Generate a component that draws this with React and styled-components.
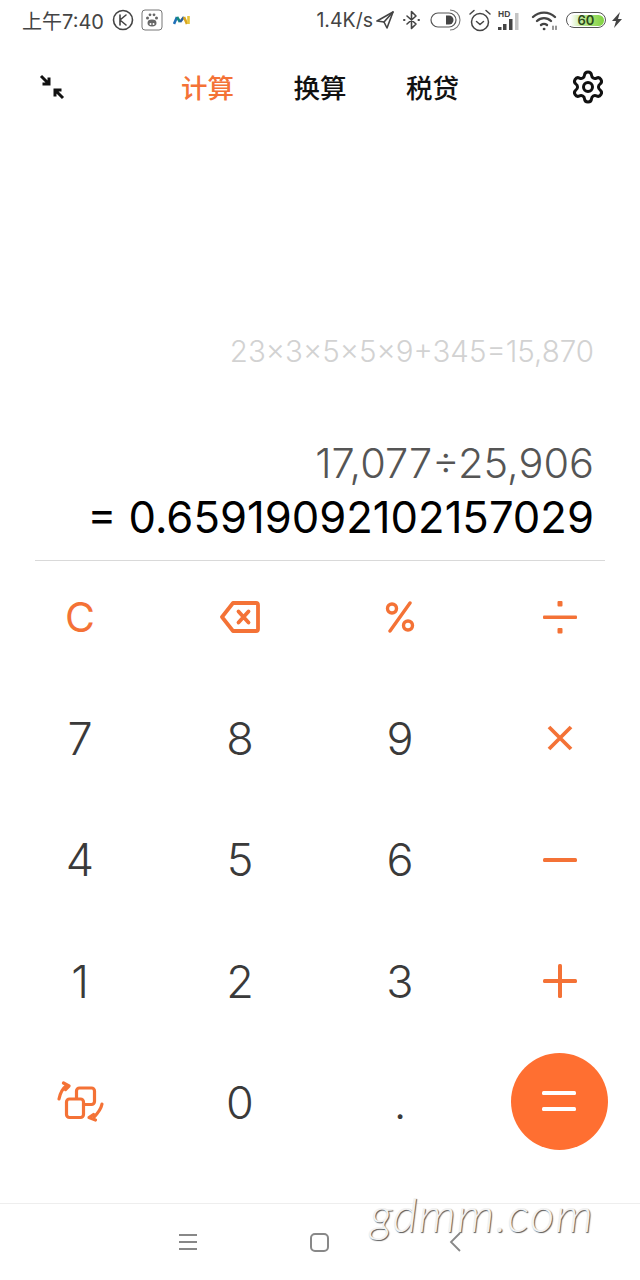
import React from "react";
import styled, { createGlobalStyle } from "styled-components";
import { Settings } from "lucide-react";

const ORANGE = "#f47236";

const Global = createGlobalStyle`
  html, body { margin: 0; padding: 0; background: #fff; }
  body { font-family: "Inter", "Noto Sans CJK SC", sans-serif; }
`;

const Page = styled.div`
  width: 640px;
  height: 1280px;
  position: relative;
  overflow: hidden;
  display: flex;
  flex-direction: column;
  background: #fff;
`;

const StatusBar = styled.div`
  height: 40px;
  padding: 0 17px 0 22px;
  display: flex;
  align-items: center;
  justify-content: space-between;
  color: #444;
`;

const StatusGroup = styled.div`
  display: flex;
  align-items: center;
`;

const Slot = styled.div`
  margin-left: ${(p) => p.$left || 0}px;
  display: flex;
`;

const StatusText = styled.span`
  font-family: "Inter", "Noto Sans CJK SC", sans-serif;
  font-size: ${(p) => p.$size || 19.5}px;
  white-space: nowrap;
`;

const NavTabs = styled.div`
  height: 94px;
  padding: 0 34px 0 38px;
  display: flex;
  align-items: center;
  justify-content: space-between;
`;

const Tabs = styled.div`
  display: flex;
  gap: 59.5px;
  margin-left: 4px;
`;

const Tab = styled.div`
  font-family: "Noto Sans CJK SC", sans-serif;
  font-size: 26.5px;
  font-weight: 500;
  line-height: 34px;
  color: ${(p) => (p.$active ? ORANGE : "#111")};
`;

const Display = styled.div`
  height: 427px;
  margin: 0 35px;
  box-sizing: border-box;
  border-bottom: 1px solid #d9d9d9;
  display: flex;
  flex-direction: column;
  align-items: flex-end;
  padding: 0 11px 0 0;
  white-space: nowrap;
`;

const History = styled.div`
  margin-top: 197px;
  font-size: 29.5px;
  font-weight: 300;
  line-height: 40px;
  color: #d2d2d2;
`;

const Expression = styled.div`
  margin-top: 66px;
  font-size: 41.5px;
  font-weight: 300;
  line-height: 52px;
  color: #555;
`;

const Result = styled.div`
  margin-top: 3px;
  font-size: 43.6px;
  font-weight: 380;
  line-height: 52px;
  color: #000;
`;

const Keypad = styled.div`
  height: 608px;
  display: grid;
  grid-template-columns: repeat(4, 160px);
  grid-auto-rows: 121.5px;
  margin-top: -5px;
`;

const Key = styled.div`
  display: flex;
  align-items: center;
  justify-content: center;
  font-size: ${(p) => p.$size || 45}px;
  font-weight: ${(p) => p.$weight || 300};
  color: ${(p) => (p.$accent ? ORANGE : "#3a3a3a")};
`;

const EqualsButton = styled.div`
  width: 97px;
  height: 97px;
  margin: 0 2px 3px 0;
  border-radius: 50%;
  background: #ff6f31;
  display: flex;
  align-items: center;
  justify-content: center;
`;

const BottomNav = styled.div`
  position: absolute;
  left: 0;
  right: 0;
  top: 1203px;
  height: 77px;
  border-top: 1px solid #eeeeee;
  box-sizing: border-box;
  padding-left: 178px;
  display: grid;
  grid-template-columns: 132px 139px auto;
  align-items: center;
`;

const Watermark = styled.div`
  position: absolute;
  left: 370px;
  top: 1187px;
  font-family: "Lato", sans-serif;
  font-style: italic;
  font-weight: 300;
  font-size: 48px;
  line-height: 54px;
  letter-spacing: 1px;
  color: #f2f2f2;
  text-shadow: 1px 1px 1px #555;
`;

const Stroke = styled.svg`
  display: block;
  fill: none;
  stroke: ${(p) => p.$color || "currentColor"};
  stroke-linecap: round;
  stroke-linejoin: round;
`;

const KIcon = () => (
  <Stroke width="22" height="22" viewBox="0 0 22 22" strokeWidth="1.6">
    <circle cx="11" cy="11" r="9.5" />
    <path d="M8 6v10M14 6l-6 5 6 5" />
  </Stroke>
);

const PawIcon = () => (
  <svg width="22" height="24" viewBox="0 0 22 24">
    <rect x="1" y="2" width="20" height="20" rx="3" fill="none" stroke="#777" strokeWidth="1" />
    <g fill="#666">
      <circle cx="6.5" cy="10" r="1.5" />
      <circle cx="15.5" cy="10" r="1.5" />
      <circle cx="9" cy="6.8" r="1.4" />
      <circle cx="13" cy="6.8" r="1.4" />
      <ellipse cx="11" cy="15" rx="4.5" ry="3.4" />
    </g>
    <circle cx="9.5" cy="16" r="1" fill="#fff" />
    <circle cx="12.5" cy="16" r="1" fill="#fff" />
  </svg>
);

const MiniLogo = () => (
  <svg width="18" height="10" viewBox="0 0 18 10" fill="none" strokeWidth="2.6">
    <path d="M1 9 4 2" stroke="#1f6fb8" />
    <path d="M4 2l3 5" stroke="#14897f" />
    <path d="M7 7l4-5" stroke="#2a5f9e" />
    <path d="M11 2l3 7" stroke="#d9a520" />
    <path d="M15.5 1v8" stroke="#e8c53a" />
  </svg>
);

const LocationIcon = () => (
  <Stroke width="18" height="18" viewBox="0 0 18 18" strokeWidth="1.6">
    <path d="M17 1 1 10l7 1 3 6z" />
    <path d="M17 1 8 11" />
  </Stroke>
);

const BluetoothIcon = () => (
  <Stroke width="17" height="20" viewBox="0 0 17 20" strokeWidth="1.6">
    <path d="M4 6l9 8-4.5 4.5V1.5L13 6l-9 8" />
    <path d="M1 10h.5M15.5 10h.5" strokeWidth="2" />
  </Stroke>
);

const ToggleIcon = () => (
  <svg width="31" height="22" viewBox="0 0 31 22">
    <rect x="1" y="4" width="25" height="14" rx="7" fill="none" stroke="#555" strokeWidth="1.2" />
    <path d="M16 6.5h3a4.5 4.5 0 0 1 0 9h-3z" fill="#444" />
    <path d="M20 1a10 10 0 0 1 0 20" fill="none" stroke="#777" strokeWidth="1.1" />
  </svg>
);

const AlarmIcon = () => (
  <Stroke width="24" height="24" viewBox="0 0 24 24" strokeWidth="1.5">
    <circle cx="12" cy="14" r="8.5" />
    <path d="M8.5 13.5l3.5 3 3.5-3M2 6l4-3.5M22 6l-4-3.5" />
  </Stroke>
);

const HdLabel = styled.text`
  font-family: "Liberation Sans", sans-serif;
  font-size: 8.5px;
  font-weight: 700;
  fill: #444;
`;

const SignalIcon = () => (
  <svg width="26" height="24" viewBox="0 0 26 24">
    <rect x="1" y="19" width="3.5" height="3" fill="#444" />
    <rect x="6" y="16" width="3.5" height="6" fill="#444" />
    <rect x="12" y="11" width="3.5" height="11" fill="#444" />
    <rect x="18" y="5" width="3.5" height="17" fill="#c4c4c4" />
    <HdLabel x="1" y="9">HD</HdLabel>
  </svg>
);

const WifiIcon = () => (
  <Stroke width="28" height="22" viewBox="0 0 28 22" strokeWidth="2.4">
    <path d="M2 8a16 16 0 0 1 22 0M6 12a10 10 0 0 1 14 0M10 16a5 5 0 0 1 6 0" />
    <path d="M13 20h.2" strokeWidth="2.6" />
    <path d="M22 17v3.5M25 17v3.5" strokeWidth="1.1" />
  </Stroke>
);

const BatteryBox = styled.div`
  width: 40px;
  height: 16px;
  box-sizing: border-box;
  border: 1.5px solid #555;
  border-radius: 8px;
  padding: 1.5px;
  display: flex;
`;

const BatteryFill = styled.div`
  flex: 1;
  border-radius: 0 6px 6px 0;
  background: linear-gradient(to right, #fff 5%, #bde88f 40%, #7fd23f 100%);
  font-size: 13px;
  line-height: 10px;
  font-weight: 600;
  text-align: center;
  color: #2c4a1c;
`;

const BoltIcon = () => (
  <svg width="12" height="18" viewBox="0 0 12 18">
    <path d="M9 1 1 10h4l-2 7 8-9H7z" fill="#444" />
  </svg>
);

const CollapseIcon = () => (
  <Stroke width="28" height="28" viewBox="0 0 28 28" $color="#111" strokeWidth="3">
    <path d="M3 3l8 8M11 4.5V11H4.5" strokeLinecap="butt" strokeLinejoin="miter" />
    <path d="M25 25l-8-8M17 23.5V17h6.5" strokeLinecap="butt" strokeLinejoin="miter" />
  </Stroke>
);

const BackspaceIcon = () => (
  <Stroke width="40" height="32" viewBox="0 0 40 32" $color={ORANGE} strokeWidth="3.8">
    <path d="M13 2h23a2 2 0 0 1 2 2v24a2 2 0 0 1-2 2H13L2 16z" />
    <path d="M18.5 10.5l10 11M28.5 10.5l-10 11" />
  </Stroke>
);

const PercentIcon = () => (
  <Stroke width="30" height="32" viewBox="0 0 30 32" $color={ORANGE} strokeWidth="3.4">
    <circle cx="7" cy="7.5" r="4.5" />
    <circle cx="23" cy="24.5" r="4.5" />
    <path d="M25 2 5 30" />
  </Stroke>
);

const DivideIcon = () => (
  <svg width="34" height="34" viewBox="0 0 34 34">
    <rect x="0" y="15.5" width="34" height="3.5" rx="1" fill={ORANGE} />
    <rect x="14.5" y="1" width="5" height="5.5" rx="1" fill={ORANGE} />
    <rect x="14.5" y="28" width="5" height="5.5" rx="1" fill={ORANGE} />
  </svg>
);

const TimesIcon = () => (
  <Stroke width="28" height="28" viewBox="0 0 28 28" $color={ORANGE} strokeWidth="3.8">
    <path d="M3 3l22 22M25 3 3 25" strokeLinecap="butt" />
  </Stroke>
);

const MinusIcon = () => (
  <svg width="34" height="4" viewBox="0 0 34 4">
    <rect width="34" height="4" rx="1.5" fill={ORANGE} />
  </svg>
);

const PlusIcon = () => (
  <svg width="34" height="34" viewBox="0 0 34 34">
    <rect y="15" width="34" height="4" rx="1.5" fill={ORANGE} />
    <rect x="15" width="4" height="34" rx="1.5" fill={ORANGE} />
  </svg>
);

const SwapIcon = () => (
  <Stroke width="48" height="44" viewBox="0 0 48 44" $color={ORANGE} strokeWidth="3.2">
    <rect x="20.5" y="7" width="18" height="16.5" rx="3" />
    <rect x="10.5" y="18" width="17" height="18.5" rx="3" fill="#fff" />
    <path d="M3 18C4 13 6 8 10 5" />
    <path d="M7.5 2 13 5l-3.5 3.5" />
    <path d="M46 23c-1 5-4 9-8 13" />
    <path d="M39.5 39 33 36.5l4.5-3" />
  </Stroke>
);

const EqualsIcon = () => (
  <svg width="34" height="24" viewBox="0 0 34 24">
    <rect y="2" width="34" height="4" rx="1.5" fill="#fff" />
    <rect y="18" width="34" height="4" rx="1.5" fill="#fff" />
  </svg>
);

const MenuGlyph = () => (
  <Stroke width="20" height="18" viewBox="0 0 20 18" $color="#888" strokeWidth="1.8">
    <path d="M1 2h18M1 9h18M1 16h18" strokeLinecap="butt" />
  </Stroke>
);

const HomeGlyph = () => (
  <Stroke width="19" height="19" viewBox="0 0 19 19" $color="#888" strokeWidth="2">
    <rect x="1" y="1" width="17" height="17" rx="4" />
  </Stroke>
);

const BackGlyph = () => (
  <Stroke width="12" height="20" viewBox="0 0 12 20" $color="#888" strokeWidth="1.8">
    <path d="M11 1 2 10l9 9" strokeLinecap="butt" strokeLinejoin="miter" />
  </Stroke>
);

const App = () => {
  return (
    <Page>
      <Global />
      <StatusBar>
        <StatusGroup>
          <StatusText $size={20}>上午7:40</StatusText>
          <Slot $left={8}><KIcon /></Slot>
          <Slot $left={7}><PawIcon /></Slot>
          <Slot $left={10}><MiniLogo /></Slot>
        </StatusGroup>
        <StatusGroup>
          <StatusText>1.4K/s</StatusText>
          <Slot $left={3}><LocationIcon /></Slot>
          <Slot $left={9}><BluetoothIcon /></Slot>
          <Slot $left={10}><ToggleIcon /></Slot>
          <Slot $left={7}><AlarmIcon /></Slot>
          <Slot $left={5}><SignalIcon /></Slot>
          <Slot $left={8}><WifiIcon /></Slot>
          <Slot $left={7}>
            <BatteryBox><BatteryFill>60</BatteryFill></BatteryBox>
          </Slot>
          <Slot $left={5}><BoltIcon /></Slot>
        </StatusGroup>
      </StatusBar>
      <NavTabs>
        <CollapseIcon />
        <Tabs>
          <Tab $active>计算</Tab>
          <Tab>换算</Tab>
          <Tab>税贷</Tab>
        </Tabs>
        <Settings size={36} color="#111" strokeWidth={2} />
      </NavTabs>
      <Display>
        <History>23×3×5×5×9+345=15,870</History>
        <Expression>17,077÷25,906</Expression>
        <Result>= 0.65919092102157029</Result>
      </Display>
      <Keypad>
        <Key $accent $size={41} $weight={400}>C</Key>
        <Key><BackspaceIcon /></Key>
        <Key><PercentIcon /></Key>
        <Key><DivideIcon /></Key>
        <Key>7</Key>
        <Key>8</Key>
        <Key>9</Key>
        <Key><TimesIcon /></Key>
        <Key>4</Key>
        <Key>5</Key>
        <Key>6</Key>
        <Key><MinusIcon /></Key>
        <Key>1</Key>
        <Key>2</Key>
        <Key>3</Key>
        <Key><PlusIcon /></Key>
        <Key><SwapIcon /></Key>
        <Key>0</Key>
        <Key>.</Key>
        <Key><EqualsButton><EqualsIcon /></EqualsButton></Key>
      </Keypad>
      <BottomNav>
        <MenuGlyph />
        <HomeGlyph />
        <BackGlyph />
      </BottomNav>
      <Watermark>gdmm.com</Watermark>
    </Page>
  );
};

export default App;
